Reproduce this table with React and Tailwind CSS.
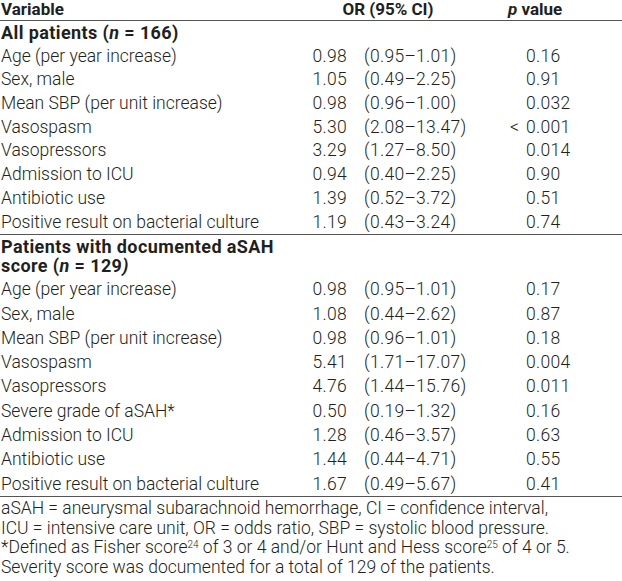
import React from 'react';

const groupOne = [
  ['Age (per year increase)', '0.98', '(0.95–1.01)', '0.16'],
  ['Sex, male', '1.05', '(0.49–2.25)', '0.91'],
  ['Mean SBP (per unit increase)', '0.98', '(0.96–1.00)', '0.032'],
  ['Vasospasm', '5.30', '(2.08–13.47)', '< 0.001'],
  ['Vasopressors', '3.29', '(1.27–8.50)', '0.014'],
  ['Admission to ICU', '0.94', '(0.40–2.25)', '0.90'],
  ['Antibiotic use', '1.39', '(0.52–3.72)', '0.51'],
  ['Positive result on bacterial culture', '1.19', '(0.43–3.24)', '0.74'],
];

const groupTwo = [
  ['Age (per year increase)', '0.98', '(0.95–1.01)', '0.17'],
  ['Sex, male', '1.08', '(0.44–2.62)', '0.87'],
  ['Mean SBP (per unit increase)', '0.98', '(0.96–1.01)', '0.18'],
  ['Vasospasm', '5.41', '(1.71–17.07)', '0.004'],
  ['Vasopressors', '4.76', '(1.44–15.76)', '0.011'],
  ['Severe grade of aSAH*', '0.50', '(0.19–1.32)', '0.16'],
  ['Admission to ICU', '1.28', '(0.46–3.57)', '0.63'],
  ['Antibiotic use', '1.44', '(0.44–4.71)', '0.55'],
  ['Positive result on bacterial culture', '1.67', '(0.49–5.67)', '0.41'],
];

const Row = ({ row, lh }) => {
  const [label, or, ci, p] = row;
  const less = p.startsWith('<');
  return (
    <div className={`flex ${lh} whitespace-nowrap`}>
      <div className="w-[300px] pl-[1px]">{label}</div>
      <div className="w-[47px] text-right tracking-[0.3px]">{or}</div>
      <div className="w-[179px] pl-[17px] tracking-[0.3px]">{ci}</div>
      <div className="tracking-[0.3px]">
        {less ? (
          <>
            <span className="-ml-[16px] inline-block w-[16px]">&lt;</span>
            {p.slice(2)}
          </>
        ) : (
          p
        )}
      </div>
    </div>
  );
};

export default function App() {
  return (
    <div
      className="w-[622px] h-[581px] overflow-hidden bg-white text-[#231f20] text-[17.5px] font-light"
      style={{ fontFamily: 'Roboto, "Liberation Sans", sans-serif' }}
    >
      <div className="flex h-[21px] pt-[1px] leading-[17px] text-[17px] font-bold border-b border-[#555]">
        <div className="w-[300px] pl-[1px]">Variable</div>
        <div className="w-[176px] text-center">OR (95% CI)</div>
        <div className="ml-[32px]">
          <i>p</i> value
        </div>
      </div>

      <div className="border-b border-[#555]">
        <div className="leading-[23.6px] text-[18px] tracking-[0.4px] font-bold pl-[1px]">
          All patients (<i>n</i> = 166)
        </div>
        {groupOne.map((r, i) => (
          <Row key={i} row={r} lh="leading-[23.7px]" />
        ))}
      </div>

      <div className="border-b border-[#555]">
        <div className="pt-[2px] pb-[2px] leading-[19px] text-[18px] tracking-[0.4px] font-bold pl-[1px]">
          Patients with documented aSAH
          <br />
          score (<i>n</i> = 129<i>)</i>
        </div>
        {groupTwo.map((r, i) => (
          <Row key={i} row={r} lh="leading-[24.3px]" />
        ))}
      </div>

      <div className="pt-[2px] leading-[19.7px] pl-[1px] whitespace-nowrap">
        <div>aSAH = aneurysmal subarachnoid hemorrhage, CI = confidence interval,</div>
        <div>ICU = intensive care unit, OR = odds ratio, SBP = systolic blood pressure.</div>
        <div>
          *Defined as Fisher score<sup className="text-[10px]">24</sup> of 3 or 4 and/or Hunt and Hess score
          <sup className="text-[10px]">25</sup> of 4 or 5.
        </div>
        <div>Severity score was documented for a total of 129 of the patients.</div>
      </div>
    </div>
  );
}
